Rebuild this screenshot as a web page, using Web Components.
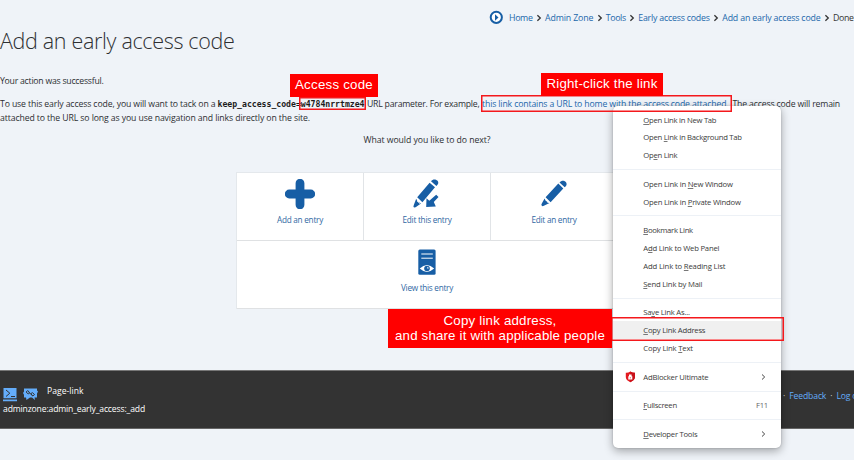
<!DOCTYPE html>
<html lang="en">
<head>
<meta charset="utf-8">
<title>Add an early access code</title>
<style>
html,body{margin:0;height:460px;overflow:hidden;background:#eff3f8}
body{font-family:"Open Sans","Noto Sans",sans-serif}
</style>
</head>
<body>
<admin-page></admin-page>
<script>
class FitText extends HTMLElement{
  connectedCallback(){
    this.attachShadow({mode:'open'}).innerHTML=`<style>:host{display:inline-block;white-space:nowrap;flex:none}span{display:inline-block}</style><span><slot></slot></span>`;
    const w=parseFloat(this.getAttribute('w')),s=this.shadowRoot.querySelector('span');
    this.style.width=w+'px';
    const n=this.textContent.length;
    const fit=()=>{s.style.letterSpacing='0';const r=s.getBoundingClientRect().width;if(r)s.style.letterSpacing=((w-r)/n)+'px'};
    fit();requestAnimationFrame(fit);
  }
}
customElements.define('fit-text',FitText);

const icons={
 add:'<svg viewBox="0 0 30 30" width="30" height="30"><path d="M15 4.2v21.600M4.200 15h21.600" stroke="#175ea5" stroke-width="8.800" stroke-linecap="round"/></svg>',
 pencil:'<svg viewBox="0 0 30 30" width="30" height="30"><g fill="#175ea5"><path d="M19.300 4.600l5 4.800L11.600 23.200 6.600 18.300zM20.500 3.400c2-2.400 4.800-2 6.100-.6 1.500 1.500 1.500 3.800-.9 5.500zM5.600 19.600l1.200 2.500 1.200.3.500 1.300 2 .4L4.900 26.800l-1.500.4-1.100-1.100.5-1.700z"/></g></svg>',
 editthis:'<svg viewBox="0 0 30 30" width="30" height="30"><g fill="#175ea5"><path d="M17.600 3.700l5.400 4.500L10.400 23.200 5.200 18.300zM19 2.300c1.800-2.500 4.800-2 6.300-.7 1.400 1.400 1.500 3.600-.9 5.300zM4.200 19.800l1.300 2.700 3.500 1.900-5.400 3.800-1.500.4-.7-.8.4-1.800z"/><path d="M24.200 15.700l2.300 2.200-4.700 5 2 4.600-9.600.6.300-8.900 2.800 2.500z"/></g><path d="M5 21.800l3.600 3.500" stroke="#fff" stroke-width=".8"/></svg>',
 view:'<svg viewBox="0 0 30 30" width="30" height="30"><rect x="6.300" y="2.500" width="17.300" height="25.200" rx="1.500" fill="#175ea5"/><path d="M9.300 7h11.500M9.300 11.200h11.500" stroke="#fff" stroke-width="1"/><path d="M7.700 21.600q7.200-7.300 14.500 0-7.300 6.600-14.500 0" fill="#fff"/><circle cx="15" cy="21.500" r="2.800" fill="#175ea5"/><path d="M15.600 19.800l1.400 1.500-2 .2" fill="#fff"/></svg>'};

customElements.define('bread-crumbs',class extends HTMLElement{
 connectedCallback(){this.attachShadow({mode:'open'}).innerHTML=`<style>
 :host{display:flex;align-items:center;height:14px;padding:11px 0 0 489px;font-size:8.800px;line-height:14px;color:#2267ab;white-space:nowrap}
 .logo{width:15px;height:15px;flex:none;margin-right:5px;position:relative;top:-1px}.sep{width:6px;height:8px;flex:none;margin:0 3.100px 0 3.400px}.now{color:#333}</style>
 <svg class="logo" viewBox="0 0 15 15"><circle cx="7.300" cy="7.300" r="5.600" fill="#fff" stroke="#175ea5" stroke-width="2"/><path d="M6 4.200l3.500 3.300L6 10.700z" fill="#175ea5"/></svg>
 ${[['Home',23.500],['Admin Zone',48.300],['Tools',20],['Early access codes',71.500],['Add an early access code',98.300]].map(([t,w])=>`<fit-text w="${w}">${t}</fit-text><svg class="sep" viewBox="0 0 6 8"><path d="M1.400 1.200L4.300 4 1.400 6.800" fill="none" stroke="#333" stroke-width="1.300"/></svg>`).join('')}<fit-text class="now" w="20.500">Done</fit-text>`}
});

customElements.define('action-tile',class extends HTMLElement{
 connectedCallback(){this.attachShadow({mode:'open'}).innerHTML=`<style>
 :host{display:flex;flex-direction:column;align-items:center;box-sizing:border-box;height:68px;padding-top:6px;background:#fff;border-right:1px solid #e1e4e7;border-bottom:1px solid #dfe1e3;font-size:8.200px;color:#3068a3}
 svg{display:block}fit-text{line-height:11px;margin-top:5px}</style>${icons[this.getAttribute('icon')]}<fit-text w="${this.getAttribute('w')}">${this.getAttribute('label')}</fit-text>`}
});
customElements.define('action-grid',class extends HTMLElement{
 connectedCallback(){this.attachShadow({mode:'open'}).innerHTML=`<style>
 :host{display:grid;grid-template-columns:127px 127px 127px;width:381px;margin:25px auto 0;border:solid #e4e8ec;border-width:1px 0 0 1px;box-sizing:content-box}
 ::slotted(.wide){grid-column:1/4}</style><slot></slot>`}
});

customElements.define('page-footer',class extends HTMLElement{
 connectedCallback(){this.attachShadow({mode:'open'}).innerHTML=`<style>
 :host{display:flex;justify-content:space-between;box-sizing:border-box;height:59px;background:#333;color:#fff;font-size:8.600px;border-top:1px solid #777;border-bottom:1px solid #666}
 .left{padding:13px 0 0 3px}.top{display:flex;height:18px}.top svg{margin-top:4px;margin-right:6px}.top fit-text{line-height:14px;margin-left:3px}.path{line-height:14px}
 .right{display:flex;align-items:center;height:49px;color:#64adfa;gap:4px;width:71px;overflow:hidden}.dot{color:#ddd}</style>
 <div class="left"><div class="top">
 <svg width="14" height="14" viewBox="0 0 14 14"><path d="M.5 0h13v10.300H.5zM0 11.500h14v1.700H0z" fill="#64adfa"/><path d="M3 2l3.800 3.200L3 8.500M8 8.500h4" stroke="#333" stroke-width="1" fill="none"/></svg>
 <svg width="15" height="14" viewBox="0 0 15 14"><path d="M1 .5h13v2l1 1-1 2v4h-2.500L12 12l-3-2.500H7L3.500 12 3 9.500H1V6.700L0 5l1-1.500z" fill="#64adfa"/><g fill="none" stroke="#333" stroke-width="1"><path d="M6.500 4.500l-1.800-2-1.500 1.500 2 2 1.400-1M8 6l1.700 2 1.800-1.400-2-2-1.500 1M5.500 4l4 3.500"/></g></svg>
 <fit-text w="36.500">Page-link</fit-text></div><fit-text class="path" w="142">adminzone:admin_early_access:_add</fit-text></div>
 <div class="right"><span class="dot">·</span><fit-text w="37">Feedback</fit-text><span class="dot">·</span><fit-text w="28.500">Log out</fit-text></div>`}
});

customElements.define('menu-row',class extends HTMLElement{
 connectedCallback(){const t=this.getAttribute('label'),k=+this.getAttribute('key'),w=this.getAttribute('w');
 const label=this.hasAttribute('key')?t.slice(0,k)+'<u>'+t[k]+'</u>'+t.slice(k+1):t;
 this.attachShadow({mode:'open'}).innerHTML=`<style>
 :host{display:flex;align-items:center;box-sizing:border-box;height:17.850px;padding:0 13px 0 11.300px;font-size:7.700px;line-height:12px;color:#3b3b3b}
 :host([active]){background:#f0f0f0}.icon{width:19px;height:12px;flex:none}.icon svg{display:block;margin-left:1px}.end{margin-left:auto;display:flex;color:#666}u{text-decoration-thickness:.6px;text-underline-offset:1px;text-decoration-color:#777}.chev{margin-right:2px}</style>
 <span class="icon">${this.hasAttribute('shield')?'<svg width="11" height="12" viewBox="0 0 11 12"><path d="M5.300.5Q7.800 2 10 1.700V6Q9.800 9.200 5.300 11.200.8 9.200.8 6V1.700Q3 2 5.300.5" fill="#e21a20"/><path d="M5.300.5Q7.800 2 10 1.700V6Q9.800 9.200 5.300 11.200" fill="#c91119"/><path d="M3.300 5.200h4v3.300h-4zM4 5.500V3.400h2.600v2.100" fill="#fff"/><path d="M5.300 6v1.500" stroke="#d33" stroke-width=".7"/></svg>':''}</span>
 <fit-text w="${w}">${label}</fit-text><span class="end">${this.hasAttribute('sub')?'<svg class="chev" width="5" height="8" viewBox="0 0 5 8"><path d="M1 1.500L3.700 4 1 6.500" fill="none" stroke="#444"/></svg>':this.hasAttribute('hint')?`<fit-text w="12">${this.getAttribute('hint')}</fit-text>`:''}</span>`}
});
customElements.define('context-menu',class extends HTMLElement{
 connectedCallback(){this.attachShadow({mode:'open'}).innerHTML=`<style>
 :host{display:block;position:absolute;left:613px;top:106px;width:168px;height:341.500px;box-sizing:border-box;padding-top:4.600px;background:#fff;border-radius:5px;box-shadow:0 3px 10px #0005,0 0 2px #0003}
 hr{border:0;height:1px;background:#edf1f6;margin:4.900px 0}</style>
 ${[[['Open Link in New Tab',73,0],['Open Link in Background Tab',98.500,5],['Open Link',34,2]],
 [['Open Link in New Window',89.500,13],['Open Link in Private Window',97.500,13]],
 [['Bookmark Link',49.500,0],['Add Link to Web Panel',76,1],['Add Link to Reading List',82,12],['Send Link by Mail',59,0]],
 [['Save Link As...',46.500,2],['Copy Link Address',62,0,'active'],['Copy Link Text',49.500,10]],
 [['AdBlocker Ultimate',65,'','shield sub']],[['Fullscreen',33.500,0,'hint="F11"']],[['Developer Tools',54,0,'sub']]]
 .map(g=>g.map(([l,w,k,x])=>`<menu-row label="${l}" w="${w}" ${k===''?'':`key="${k}"`} ${x||''}></menu-row>`).join('')).join('<hr>')}`}
});
customElements.define('call-out',class extends HTMLElement{
 connectedCallback(){this.attachShadow({mode:'open'}).innerHTML=`<style>
 :host{position:absolute;display:flex;flex-direction:column;align-items:center;justify-content:center;box-sizing:border-box;background:#f00;color:#fff;padding-bottom:1px;font:13.300px/15.500px "Liberation Sans",Arial,sans-serif}</style><slot></slot>`}
});
customElements.define('mark-box',class extends HTMLElement{
 connectedCallback(){this.attachShadow({mode:'open'}).innerHTML=`<style>:host{position:absolute;display:block;box-sizing:border-box;box-shadow:inset 0 0 0 1.500px #f4181c}</style>`}
});

customElements.define('admin-page',class extends HTMLElement{
 connectedCallback(){this.attachShadow({mode:'open'}).innerHTML=`<style>
 :host{display:block;position:relative;width:854px;height:460px;overflow:hidden;background:#eff3f8;color:#2d2f32}
 h1{margin:0;font-size:21.500px;font-weight:300;line-height:30px;height:30px;padding-top:1px}
 p{margin:0;font-size:8.700px;line-height:14px;height:14px;display:flex}
 .ok{margin-top:18px}.l1{margin-top:9px}
 code{font:bold 8.200px/14px "DejaVu Sans Mono",monospace;color:#1c1c1c;margin-left:2px}
 .link{color:#2267ab;margin-left:2.500px}.q{margin-top:8px;justify-content:center}
 page-footer{margin-top:61px}
 .a{left:290px;top:74px;width:88px;height:23px}.b{left:541px;top:73px;width:122px;height:23px}.c{left:388px;top:309px;width:224px;height:39px}
 .m1{left:299px;top:97px;width:67px;height:13px}.m2{left:481px;top:95px;width:251px;height:17px}.m3{left:611px;top:317px;width:173px;height:24px}
 </style>
 <bread-crumbs></bread-crumbs>
 <h1><fit-text w="234.500">Add an early access code</fit-text></h1>
 <p class="ok"><fit-text w="103.500">Your action was successful.</fit-text></p>
 <p class="l1"><fit-text w="215.500">To use this early access code, you will want to tack on a</fit-text><code><fit-text w="147">keep_access_code=w4784nrrtmze4</fit-text></code><fit-text w="112.500" style="margin-left:2.500px">URL parameter. For example,</fit-text><fit-text class="link" w="246.500">this link contains a URL to home with the access code attached.</fit-text><fit-text w="107.500" style="margin-left:4px">The access code will remain</fit-text></p>
 <p><fit-text w="310">attached to the URL so long as you use navigation and links directly on the site.</fit-text></p>
 <p class="q"><fit-text w="127">What would you like to do next?</fit-text></p>
 <action-grid><action-tile icon="add" w="46" label="Add an entry"></action-tile><action-tile icon="editthis" w="49" label="Edit this entry"></action-tile><action-tile icon="pencil" w="45" label="Edit an entry"></action-tile><action-tile class="wide" icon="view" w="52" label="View this entry"></action-tile></action-grid>
 <page-footer></page-footer>
 <context-menu></context-menu>
 <mark-box class="m1"></mark-box><mark-box class="m2"></mark-box><mark-box class="m3"></mark-box>
 <call-out class="a"><fit-text w="78">Access code</fit-text></call-out>
 <call-out class="b"><fit-text w="111">Right-click the link</fit-text></call-out>
 <call-out class="c"><fit-text w="113">Copy link address,</fit-text><fit-text w="210">and share it with applicable people</fit-text></call-out>`}
});
</script>
</body>
</html>
